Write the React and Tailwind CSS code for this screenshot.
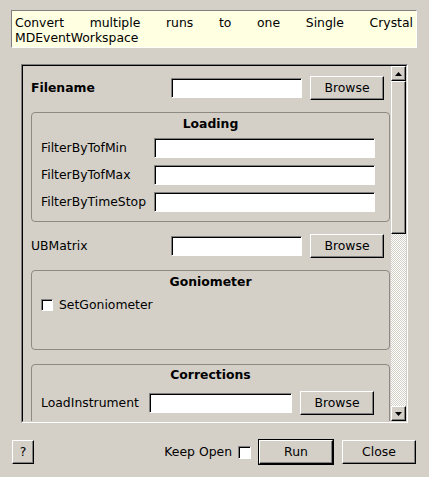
import React from 'react';

const raised =
  'bg-[#d4d0c8] border border-t-white border-l-white border-r-black border-b-black shadow-[inset_-1px_-1px_0_#808080]';
const sunken =
  'bg-white border border-t-[#808080] border-l-[#808080] border-r-white border-b-white shadow-[inset_1px_1px_0_#000]';

function Button({ children, className = '' }) {
  return (
    <button className={`${raised} flex items-center justify-center text-[12.4px] text-black leading-none ${className}`}>
      {children}
    </button>
  );
}

function Field({ className = '' }) {
  return <div className={`${sunken} h-[20px] ${className}`} />;
}

function Arrow({ up }) {
  return (
    <svg width="7" height="4" viewBox="0 0 7 4">
      {up ? <polygon points="3.5,0 7,4 0,4" fill="#000" /> : <polygon points="0,0 7,0 3.5,4" fill="#000" />}
    </svg>
  );
}

function Group({ title, className = '', titleClass = 'pt-[4px]', children }) {
  return (
    <div className={`ml-[8px] w-[359px] shrink-0 rounded-[4px] border border-[#8e8a83] ${className}`}>
      <div className={`text-center font-bold leading-[14px] ${titleClass}`}>{title}</div>
      {children}
    </div>
  );
}

export default function App() {
  return (
    <div className="w-[429px] h-[477px] bg-[#d4d0c8] font-['DejaVu_Sans',sans-serif] text-[12.4px] text-black flex flex-col overflow-hidden">
      {/* description */}
      <div className="mt-[10px] ml-[11px] w-[406px] h-[38px] bg-[#ffffe1] border border-t-[#808080] border-l-[#808080] border-r-white border-b-white px-[3px] pt-[4px] leading-[15px]">
        <div className="text-justify [text-align-last:justify]">Convert multiple runs to one Single Crystal</div>
        <div>MDEventWorkspace</div>
      </div>

      {/* scroll area */}
      <div className="mt-[16px] ml-[21px] w-[387px] h-[359px] border border-t-[#808080] border-l-[#808080] border-r-white border-b-white">
        <div className="w-full h-full border border-t-black border-l-black border-r-[#d4d0c8] border-b-[#d4d0c8] flex">
          <div className="w-[368px] h-full overflow-hidden pt-[10px] flex flex-col">
            {/* Filename */}
            <div className="flex items-center h-[24px] pl-[8px] shrink-0">
              <div className="w-[140px] font-bold">Filename</div>
              <Field className="w-[131px]" />
              <Button className="ml-[8px] w-[74px] h-[24px]">Browse</Button>
            </div>

            <Group title="Loading" className="mt-[12px] h-[110px]">
              <div className="mt-[7px] flex flex-col gap-[7px] pl-[9px]">
                {['FilterByTofMin', 'FilterByTofMax', 'FilterByTimeStop'].map((l) => (
                  <div key={l} className="flex items-center h-[20px]">
                    <div className="w-[113px]">{l}</div>
                    <Field className="w-[221px]" />
                  </div>
                ))}
              </div>
            </Group>

            {/* UBMatrix */}
            <div className="flex items-center h-[24px] pl-[8px] mt-[12px] shrink-0">
              <div className="w-[140px]">UBMatrix</div>
              <Field className="w-[131px]" />
              <Button className="ml-[8px] w-[74px] h-[24px]">Browse</Button>
            </div>

            <Group title="Goniometer" className="mt-[12px] h-[80px]">
              <div className="mt-[10px] pl-[9px] flex items-center h-[12px]">
                <div className={`${sunken} w-[12px] h-[12px]`} />
                <div className="ml-[6px]">SetGoniometer</div>
              </div>
            </Group>

            <Group title="Corrections" titleClass="pt-[3px]" className="mt-[14px] h-[120px]">
              <div className="mt-[9px] pl-[9px] flex items-center h-[24px]">
                <div className="w-[108px]">LoadInstrument</div>
                <Field className="w-[143px]" />
                <Button className="ml-[8px] w-[74px] h-[24px]">Browse</Button>
              </div>
            </Group>
          </div>

          {/* scrollbar */}
          <div className="w-[15px] h-full flex flex-col">
            <div className={`${raised} h-[15px] flex items-center justify-center`}>
              <Arrow up />
            </div>
            <div className={`${raised} h-[153px]`} />
            <div className="flex-1 bg-[repeating-conic-gradient(#d4d0c8_0_25%,#ffffff_0_50%)] bg-[length:2px_2px]" />
            <div className={`${raised} h-[15px] flex items-center justify-center`}>
              <Arrow />
            </div>
          </div>
        </div>
      </div>

      {/* bottom bar */}
      <div className="mt-[16px] h-[26px] flex items-center pl-[12px] pr-[13px]">
        <Button className="w-[22px] h-[24px]">?</Button>
        <div className="flex-1" />
        <div>Keep Open</div>
        <div className={`${sunken} ml-[6px] w-[13px] h-[13px]`} />
        <div className="ml-[7px] w-[76px] h-[26px] border border-black">
          <Button className="w-full h-full">Run</Button>
        </div>
        <Button className="ml-[8px] w-[74px] h-[24px]">Close</Button>
      </div>
    </div>
  );
}
